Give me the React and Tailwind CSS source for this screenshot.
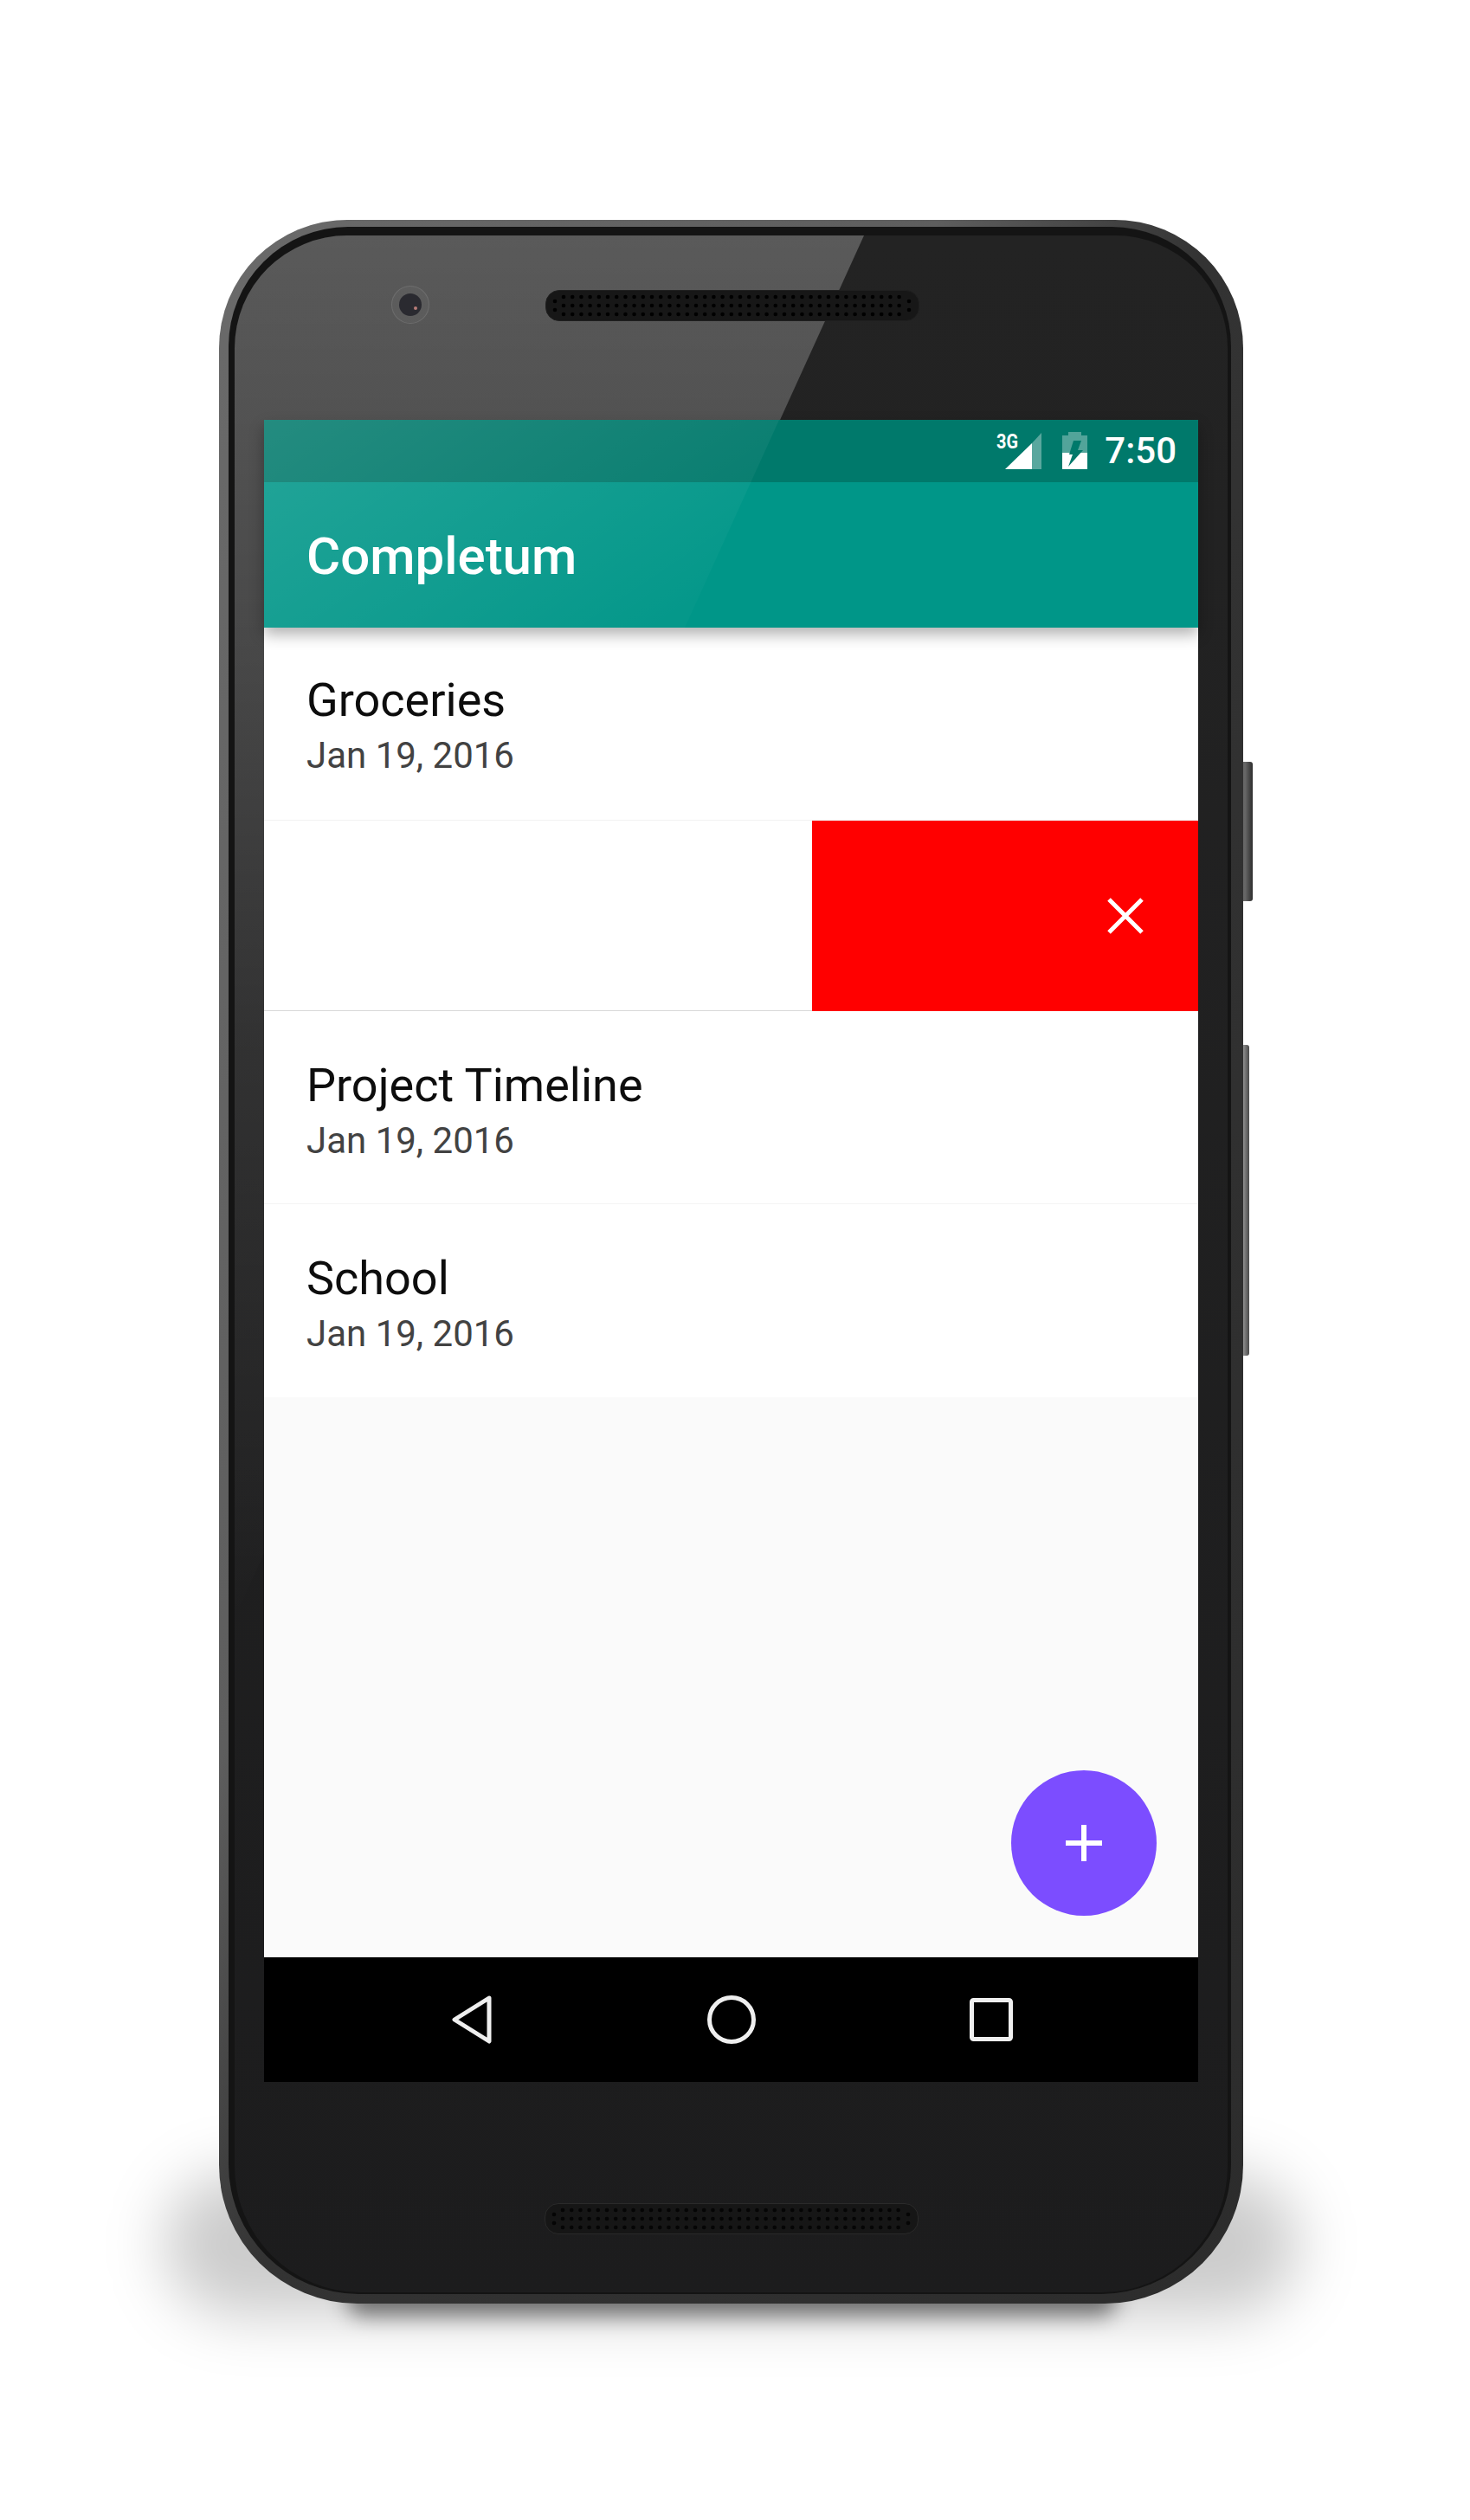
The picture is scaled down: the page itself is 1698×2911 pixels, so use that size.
import React from 'react';

const font = { fontFamily: 'Roboto, sans-serif' };

const Speaker = ({ dots, className }) => (
    <div className={`w-[432px] h-[36px] rounded-[16px] shrink-0 overflow-hidden ${className}`}>
        <svg width="432" height="36" viewBox="0 0 432 36">
            {[7, 17, 27].map((y) =>
                Array.from({ length: 39 }).map((_, i) => (
                    <circle key={`${y}-${i}`} cx={20 + i * 10.2} cy={y} r="2.3" fill={dots} />
                ))
            )}
            {[12, 22].map((y) => (
                <React.Fragment key={y}>
                    <circle cx="10" cy={y} r="2.3" fill={dots} />
                    <circle cx="419" cy={y} r="2.3" fill={dots} />
                </React.Fragment>
            ))}
        </svg>
    </div>
);

const Row = ({ title, className }) => (
    <div className={`h-[223px] bg-white pl-[49px] ${className}`}>
        <div className="text-[54px] leading-[66px] text-[#0d0d0d]">{title}</div>
        <div className="text-[42px] leading-[54px] mt-[4px] text-[#424242]">Jan 19, 2016</div>
    </div>
);

const App = () => {
    return (
        <div className="relative w-[1698px] h-[2911px] bg-white overflow-hidden pl-[253px] pt-[254px]" style={font}>
            {/* ombre sous le téléphone */}
            <div className="absolute left-[190px] top-[2510px] w-[1310px] h-[165px] rounded-[90px] bg-black/20 blur-[34px]"></div>
            <div className="absolute left-[400px] top-[2635px] w-[890px] h-[40px] rounded-[20px] bg-black/50 blur-[12px]"></div>

            {/* boutons latéraux */}
            <div className="absolute left-[1430px] top-[880px] w-[17px] h-[161px] rounded-r-[3px] bg-gradient-to-r from-[#6a6a6a] via-[#666666] to-[#2e2e2e]"></div>
            <div className="absolute left-[1430px] top-[1207px] w-[13px] h-[359px] rounded-r-[3px] bg-gradient-to-r from-[#999999] via-[#8c8c8c] to-[#4a4a4a]"></div>

            {/* coque */}
            <div className="relative w-[1183px] h-[2407px] rounded-t-[148px] rounded-b-[160px] bg-[linear-gradient(115deg,#6a6a6a_0%,#5e5e5e_36%,#333333_50%,#2c2c2c_100%)] pl-[11px] pr-[14px] pt-[8px] pb-[11px]">
                <div className="h-full rounded-t-[138px] rounded-b-[150px] bg-[#141414] pl-[7px] pr-[4px] pt-[10px] pb-[2px]">
                    {/* vitre */}
                    <div className="relative h-full rounded-t-[130px] rounded-b-[146px] overflow-hidden bg-gradient-to-b from-[#232323] to-[#1c1c1d] flex flex-col">
                        {/* reflet de la vitre */}
                        <svg className="absolute inset-0 pointer-events-none" width="1147" height="2376" viewBox="0 0 1147 2376">
                            <defs>
                                <linearGradient id="glare" x1="0" y1="0" x2="0" y2="1">
                                    <stop offset="0" stopColor="#ffffff" stopOpacity="0.25" />
                                    <stop offset="0.28" stopColor="#ffffff" stopOpacity="0.18" />
                                    <stop offset="0.58" stopColor="#ffffff" stopOpacity="0.08" />
                                    <stop offset="0.9" stopColor="#ffffff" stopOpacity="0.025" />
                                    <stop offset="1" stopColor="#ffffff" stopOpacity="0" />
                                </linearGradient>
                            </defs>
                            <path d="M0 0 H727 L0 1597 Z" fill="url(#glare)" />
                        </svg>

                        <div className="relative h-[213px] shrink-0 flex items-start pt-[63px] pl-[181px]">
                            <div className="relative w-[44px] h-[44px] mt-[-5px] rounded-full bg-white/[0.03] border border-white/10 flex items-center justify-center shrink-0">
                                <div className="w-[26px] h-[26px] rounded-full bg-[#2a2a30]"></div>
                                <div className="absolute left-[25px] top-[23px] w-[4px] h-[4px] rounded-full bg-[#b87c78]"></div>
                            </div>
                            <Speaker dots="#000000" className="ml-[134px] bg-[#171717] border border-[#1f1f1f]" />
                        </div>

                        {/* écran */}
                        <div className="relative mx-[34px] h-[1920px] shrink-0 bg-[#fafafa] flex flex-col">
                            <div className="relative z-10 shrink-0 shadow-[0_8px_16px_rgba(0,0,0,0.3)]">
                                <div className="h-[72px] bg-[#00796b] flex items-center justify-end pr-[25px]">
                                    <svg width="52" height="52" viewBox="0 -4 52 52" className="mr-[24px]">
                                        <path d="M52 1 V43 H41 V13 Z" fill="#ffffff" fillOpacity="0.35" />
                                        <path d="M41 13 V43 H10 Z" fill="#ffffff" />
                                        <text x="0" y="19" fontSize="24" fontWeight="700" fill="#ffffff" textLength="25" lengthAdjust="spacingAndGlyphs" fontFamily="Roboto, sans-serif">3G</text>
                                    </svg>
                                    <svg width="29" height="44" viewBox="0 0 29 44" className="mr-[20px]">
                                        <path d="M7 0 H22 V4 H29 V43 H0 V4 H7 Z" fill="#ffffff" fillOpacity="0.32" />
                                        <path d="M0 24 H29 V43 H0 Z" fill="#ffffff" />
                                        <path d="M13 10 H22 L18 21 H24 L7 40 L12 26 H8 Z" fill="#00796b" />
                                    </svg>
                                    <span className="text-[42px] leading-none font-medium text-white">7:50</span>
                                </div>
                                <div className="h-[168px] bg-[#009688] flex items-center pl-[49px] pt-[3px]">
                                    <span className="text-[60px] font-medium text-white">Completum</span>
                                </div>
                                {/* le reflet passe aussi sur la barre */}
                                <svg className="absolute left-0 top-0" width="1080" height="240" viewBox="0 0 1080 240">
                                    <defs>
                                        <linearGradient id="glareBar" x1="0" y1="0" x2="1" y2="0.6">
                                            <stop offset="0" stopColor="#ffffff" stopOpacity="0.14" />
                                            <stop offset="1" stopColor="#ffffff" stopOpacity="0.02" />
                                        </linearGradient>
                                    </defs>
                                    <path d="M0 0 H595 L486 240 H0 Z" fill="url(#glareBar)" />
                                </svg>
                            </div>

                            <Row title="Groceries" className="pt-[51px] border-b border-[#f2f2f2]" />
                            {/* ligne glissée */}
                            <div className="h-[220px] bg-white border-b border-[#d8d8d8] flex justify-end">
                                <div className="w-[446px] h-[220px] bg-[#ff0000] flex items-center justify-end pr-[63px]">
                                    <svg width="42" height="42" viewBox="0 0 42 42">
                                        <path d="M2 2 L40 40 M40 2 L2 40" stroke="#ffffff" strokeWidth="5" fill="none" />
                                    </svg>
                                </div>
                            </div>
                            <Row title="Project Timeline" className="pt-[53px] border-b border-[#f5f5f5]" />
                            <Row title="School" className="pt-[53px]" />

                            <div className="flex-1 flex items-end justify-end pr-[48px] pb-[48px]">
                                <div className="w-[168px] h-[168px] rounded-full bg-[#7c4dff] flex items-center justify-center">
                                    <svg width="42" height="42" viewBox="0 0 42 42">
                                        <path d="M21 0 V42 M0 21 H42" stroke="#ffffff" strokeWidth="6" fill="none" />
                                    </svg>
                                </div>
                            </div>

                            <div className="h-[144px] bg-black flex items-center justify-center shrink-0">
                                <div className="w-[300px] flex justify-center">
                                    <svg width="48" height="56" viewBox="0 0 48 56">
                                        <path d="M44 3 L4 28 L44 53 Z" stroke="#efefef" strokeWidth="5" fill="none" strokeLinejoin="round" />
                                    </svg>
                                </div>
                                <div className="w-[300px] flex justify-center">
                                    <svg width="56" height="56" viewBox="0 0 56 56">
                                        <circle cx="28" cy="28" r="25.5" stroke="#efefef" strokeWidth="5" fill="none" />
                                    </svg>
                                </div>
                                <div className="w-[300px] flex justify-center">
                                    <svg width="50" height="50" viewBox="0 0 50 50">
                                        <rect x="2.5" y="2.5" width="45" height="45" rx="2" stroke="#efefef" strokeWidth="5" fill="none" />
                                    </svg>
                                </div>
                            </div>
                        </div>

                        <div className="relative flex-1 flex items-start justify-center pt-[140px]">
                            <Speaker dots="#050505" className="bg-[#161616] border border-[#2a2a2a]" />
                        </div>
                    </div>
                </div>
            </div>
        </div>
    );
};

export default App;
